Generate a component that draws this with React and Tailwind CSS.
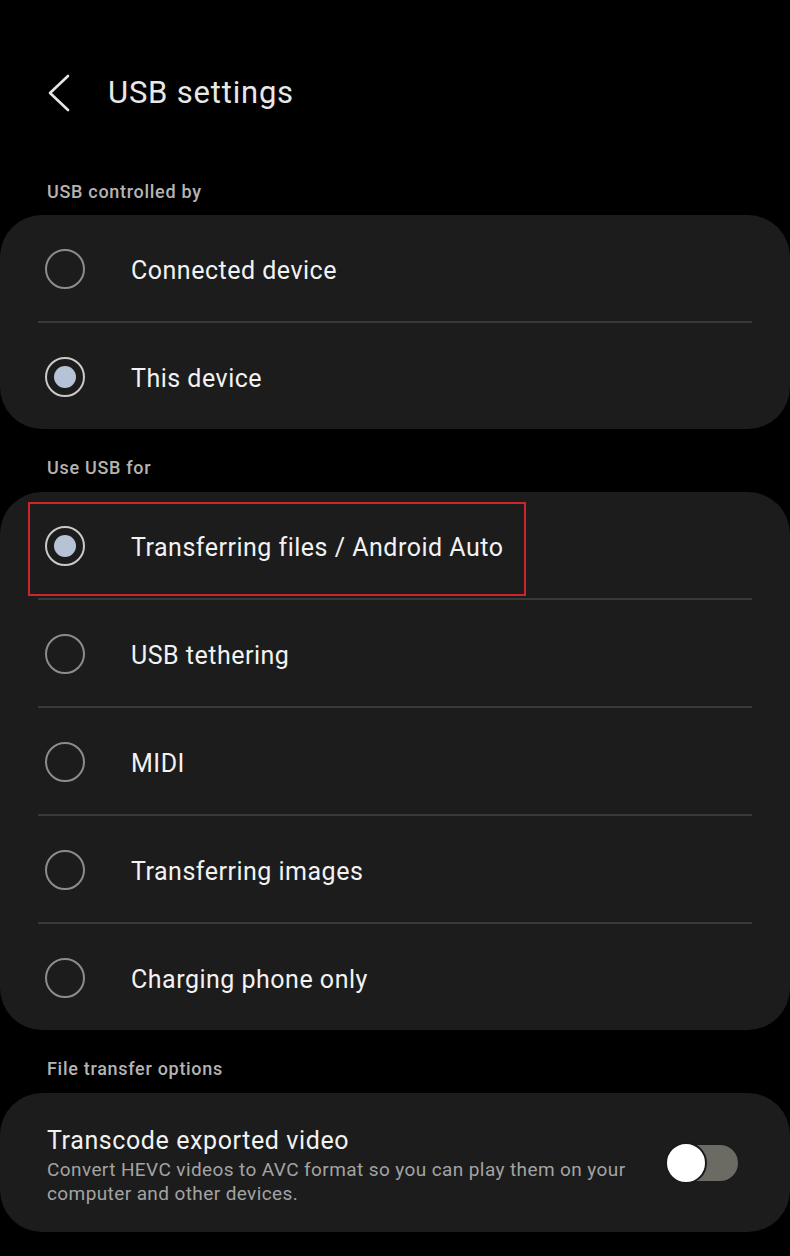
import React from "react";

const font = { fontFamily: "Roboto, 'Noto Sans', sans-serif" };

function Radio({ checked }) {
  return (
    <div
      className={
        "w-[40px] h-[40px] rounded-full border-[2px] flex items-center justify-center shrink-0 " +
        (checked ? "border-[#c9c9c9]" : "border-[#8c8c8c]")
      }
    >
      {checked && <div className="w-[22px] h-[22px] rounded-full bg-[#b6c2d6]" />}
    </div>
  );
}

function Row({ label, checked, divider, highlight }) {
  return (
    <div className="relative">
      <div className="h-[106px] flex items-center pl-[45px] pt-[2px]">
        <Radio checked={checked} />
        <span className="ml-[46px] mt-[4px] text-[25px] tracking-[0.5px] text-[#f2f2f2] leading-[30px]">{label}</span>
      </div>
      {highlight && (
        <div className="absolute left-[28px] top-[10px] w-[498px] h-[94px] border-[2px] border-[#d0242c]" />
      )}
      {divider && <div className="mx-[38px] h-[2px] bg-[#393939]" />}
    </div>
  );
}

function Label({ children, className = "" }) {
  return (
    <div className={"px-[47px] text-[18px] tracking-[0.7px] leading-[24px] text-[#b4b4b4] font-medium " + className}>
      {children}
    </div>
  );
}

export default function App() {
  return (
    <div className="w-[790px] h-[1256px] bg-black overflow-hidden" style={font}>
      <div className="h-[180px] pt-[74px] flex items-start">
        <div className="w-[108px] h-[38px] flex items-center pl-[47px]">
          <svg width="24" height="38" viewBox="0 0 24 38" fill="none">
            <path d="M21 2 L3 19 L21 36" stroke="#e6e6e6" strokeWidth="2.6" strokeLinecap="round" strokeLinejoin="round" />
          </svg>
        </div>
        <div className="text-[31px] tracking-[0.8px] leading-[38px] text-[#e8e8e8]">USB settings</div>
      </div>

      <Label className="mb-[11px]">USB controlled by</Label>
      <div className="bg-[#1c1c1c] rounded-[42px]">
        <Row label="Connected device" divider />
        <Row label="This device" checked />
      </div>

      <Label className="mt-[27px] mb-[12px]">Use USB for</Label>
      <div className="bg-[#1c1c1c] rounded-[42px]">
        <Row label="Transferring files / Android Auto" checked divider highlight />
        <Row label="USB tethering" divider />
        <Row label="MIDI" divider />
        <Row label="Transferring images" divider />
        <Row label="Charging phone only" />
      </div>

      <Label className="mt-[27px] mb-[12px]">File transfer options</Label>
      <div className="bg-[#1c1c1c] rounded-[42px] h-[139px] flex items-center pt-[6px] pl-[47px] pr-[52px]">
        <div className="flex-1">
          <div className="text-[25px] tracking-[0.6px] leading-[30px] text-[#f2f2f2]">Transcode exported video</div>
          <div className="text-[19px] tracking-[0.4px] leading-[24px] text-[#a3a3a3] mt-[2px] whitespace-nowrap">
            Convert HEVC videos to AVC format so you can play them on your
            <br />
            computer and other devices.
          </div>
        </div>
        <div className="relative w-[70px] h-[36px] rounded-full bg-[#6b6b64] ml-[20px] -mt-[6px]">
          <div className="absolute left-[-3px] top-[-3px] w-[42px] h-[42px] rounded-full bg-white border-[2px] border-[#1a1a1a]" />
        </div>
      </div>
    </div>
  );
}
